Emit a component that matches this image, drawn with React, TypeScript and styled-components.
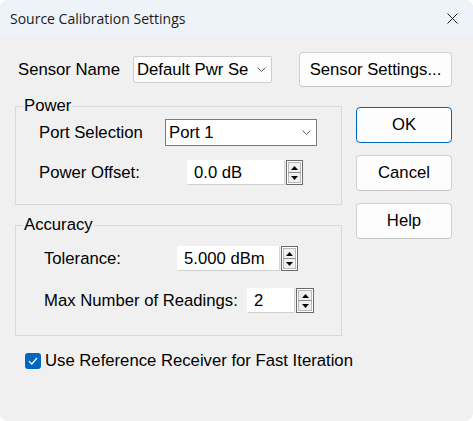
import React from 'react';
import styled, { createGlobalStyle } from 'styled-components';

const GlobalStyle = createGlobalStyle`
  html, body {
    margin: 0;
    padding: 0;
    background: #ffffff;
  }
`;

const Window = styled.div`
  width: 473px;
  height: 421px;
  border-radius: 8px;
  overflow: hidden;
  background: #f0f0f0;
  display: flex;
  flex-direction: column;
  font-family: 'Liberation Sans', Arial, sans-serif;
  font-size: 16.7px;
  color: #000;
`;

const TitleBar = styled.div`
  height: 36px;
  flex: none;
  display: flex;
  align-items: center;
  padding: 0 15px 0 10px;
  background: #eef3f9;
  font-family: 'Segoe UI', 'Open Sans', sans-serif;
  font-size: 14px;
  color: #1b1b1b;
`;

const TitleText = styled.span`
  flex: 1;
`;

const CloseIcon = styled.svg`
  width: 11px;
  height: 11px;
`;

const Body = styled.div`
  padding: 16px 21px 0 15px;
  display: flex;
  flex-direction: column;
`;

const SensorRow = styled.div`
  display: flex;
  align-items: center;
  height: 35px;
`;

const SensorLabel = styled.span`
  width: 115px;
  margin-left: 3px;
  flex: none;
`;

const ComboBox = styled.div<{ $width: number; $classic?: boolean }>`
  width: ${(p) => p.$width}px;
  height: 27px;
  box-sizing: border-box;
  flex: none;
  display: flex;
  align-items: center;
  padding: 0 5px 0 3px;
  border: 1px solid ${(p) => (p.$classic ? '#7a7a7a' : '#cdcdcd')};
  border-radius: ${(p) => (p.$classic ? 0 : 2)}px;
  background: ${(p) => (p.$classic ? '#ffffff' : '#fcfcfd')};
`;

const ComboText = styled.span`
  flex: 1;
  white-space: nowrap;
  overflow: hidden;
`;

const Chevron = styled.svg`
  width: 9px;
  height: 5px;
  flex: none;
`;

const PushButton = styled.div<{ $default?: boolean; $width: number; $height: number }>`
  width: ${(p) => p.$width}px;
  height: ${(p) => p.$height}px;
  box-sizing: border-box;
  flex: none;
  display: flex;
  align-items: center;
  justify-content: center;
  border: 1px solid ${(p) => (p.$default ? '#0067c0' : '#d0d0d0')};
  border-bottom-color: ${(p) => (p.$default ? '#0067c0' : '#c4c4c4')};
  border-radius: 4px;
  background: #fdfdfd;
`;

const SensorButton = styled(PushButton)`
  margin-left: auto;
`;

const Main = styled.div`
  display: flex;
  margin-top: 10px;
`;

const LeftColumn = styled.div`
  width: 327px;
  display: flex;
  flex-direction: column;
  gap: 11px;
`;

const RightColumn = styled.div`
  margin-left: 14px;
  padding-top: 10px;
  display: flex;
  flex-direction: column;
  gap: 12px;
`;

const GroupBox = styled.fieldset`
  margin: 0;
  padding: 0;
  min-width: 0;
  box-sizing: border-box;
  border: 1px solid #d9d9d9;
`;

const GroupLegend = styled.legend`
  margin-left: 7px;
  padding: 0 1px;
  line-height: 18px;
`;

const GroupContent = styled.div<{ $top: number; $bottom: number; $left: number; $gap: number }>`
  display: flex;
  flex-direction: column;
  padding: ${(p) => p.$top}px 0 ${(p) => p.$bottom}px ${(p) => p.$left}px;
  gap: ${(p) => p.$gap}px;
`;

const FieldRow = styled.div`
  display: flex;
  align-items: center;
`;

const FieldLabel = styled.span<{ $width: number }>`
  width: ${(p) => p.$width}px;
  flex: none;
  white-space: nowrap;
`;

const SpinInput = styled.input<{ $width: number }>`
  width: ${(p) => p.$width}px;
  height: 25px;
  box-sizing: border-box;
  margin: 0;
  padding: 0 0 0 6px;
  border: 1px solid #ffffff;
  border-right-color: #d4d4d4;
  border-bottom-color: #cfcfcf;
  background: #ffffff;
  font-family: inherit;
  font-size: inherit;
  color: #000;
  outline: none;
`;

const Spinner = styled.div<{ $width: number }>`
  width: ${(p) => p.$width}px;
  height: 25px;
  margin-left: 1px;
  box-sizing: border-box;
  border: 1px solid #6b6b6b;
  padding: 1px;
  background: #ffffff;
  display: flex;
  flex-direction: column;
`;

const SpinButton = styled.div<{ $down?: boolean }>`
  flex: 1;
  display: flex;
  align-items: center;
  justify-content: center;
  background: #f0f0f0;
  border: 1px solid #b9b9b9;
  ${(p) => (p.$down ? 'border-top-color: #8d8d8d;' : 'border-bottom: none;')}
`;

const Arrow = styled.svg`
  width: 7px;
  height: 4px;
`;

const CheckRow = styled.div`
  display: flex;
  align-items: center;
  gap: 4px;
  margin-top: 15px;
  padding-left: 10px;
`;

const CheckBox = styled.div`
  width: 16px;
  height: 16px;
  border-radius: 3px;
  background: #0067c0;
  display: flex;
  align-items: center;
  justify-content: center;
`;

const CheckMark = styled.svg`
  width: 10px;
  height: 8px;
`;

const ChevronDown = () => (
  <Chevron viewBox="0 0 9 5">
    <polyline points="0.5,0.5 4.5,4.5 8.5,0.5" fill="none" stroke="#5f5f5f" strokeWidth="1" />
  </Chevron>
);

const SpinBox: React.FC<{ value: string; inputWidth: number; spinWidth?: number }> = ({ value, inputWidth, spinWidth = 17 }) => (
  <>
    <SpinInput $width={inputWidth} value={value} readOnly />
    <Spinner $width={spinWidth}>
      <SpinButton>
        <Arrow viewBox="0 0 7 4">
          <polygon points="3.5,0 7,4 0,4" fill="#000" />
        </Arrow>
      </SpinButton>
      <SpinButton $down>
        <Arrow viewBox="0 0 7 4">
          <polygon points="0,0 7,0 3.5,4" fill="#000" />
        </Arrow>
      </SpinButton>
    </Spinner>
  </>
);

export default function App() {
  return (
    <>
      <GlobalStyle />
      <Window>
        <TitleBar>
          <TitleText>Source Calibration Settings</TitleText>
          <CloseIcon viewBox="0 0 11 11">
            <path d="M0.5 0.5 L10.5 10.5 M10.5 0.5 L0.5 10.5" stroke="#1b1b1b" strokeWidth="1" />
          </CloseIcon>
        </TitleBar>
        <Body>
          <SensorRow>
            <SensorLabel>Sensor Name</SensorLabel>
            <ComboBox $width={139}>
              <ComboText>Default Pwr Se</ComboText>
              <ChevronDown />
            </ComboBox>
            <SensorButton $width={153} $height={35}>Sensor Settings...</SensorButton>
          </SensorRow>

          <Main>
            <LeftColumn>
              <GroupBox>
                <GroupLegend>Power</GroupLegend>
                <GroupContent $top={4} $bottom={19} $left={23} $gap={14}>
                  <FieldRow>
                    <FieldLabel $width={126}>Port Selection</FieldLabel>
                    <ComboBox $width={152} $classic>
                      <ComboText>Port 1</ComboText>
                      <ChevronDown />
                    </ComboBox>
                  </FieldRow>
                  <FieldRow>
                    <FieldLabel $width={148}>Power Offset:</FieldLabel>
                    <SpinBox value="0.0 dB" inputWidth={98} />
                  </FieldRow>
                </GroupContent>
              </GroupBox>

              <GroupBox>
                <GroupLegend>Accuracy</GroupLegend>
                <GroupContent $top={12} $bottom={22} $left={28} $gap={17}>
                  <FieldRow>
                    <FieldLabel $width={133}>Tolerance:</FieldLabel>
                    <SpinBox value="5.000 dBm" inputWidth={103} />
                  </FieldRow>
                  <FieldRow>
                    <FieldLabel $width={203}>Max Number of Readings:</FieldLabel>
                    <SpinBox value="2" inputWidth={48} spinWidth={18} />
                  </FieldRow>
                </GroupContent>
              </GroupBox>
            </LeftColumn>

            <RightColumn>
              <PushButton $default $width={96} $height={36}>OK</PushButton>
              <PushButton $width={96} $height={36}>Cancel</PushButton>
              <PushButton $width={96} $height={36}>Help</PushButton>
            </RightColumn>
          </Main>

          <CheckRow>
            <CheckBox>
              <CheckMark viewBox="0 0 10 8">
                <polyline points="1,4.2 3.8,7 9,1" fill="none" stroke="#fff" strokeWidth="1.2" />
              </CheckMark>
            </CheckBox>
            <span>Use Reference Receiver for Fast Iteration</span>
          </CheckRow>
        </Body>
      </Window>
    </>
  );
}
